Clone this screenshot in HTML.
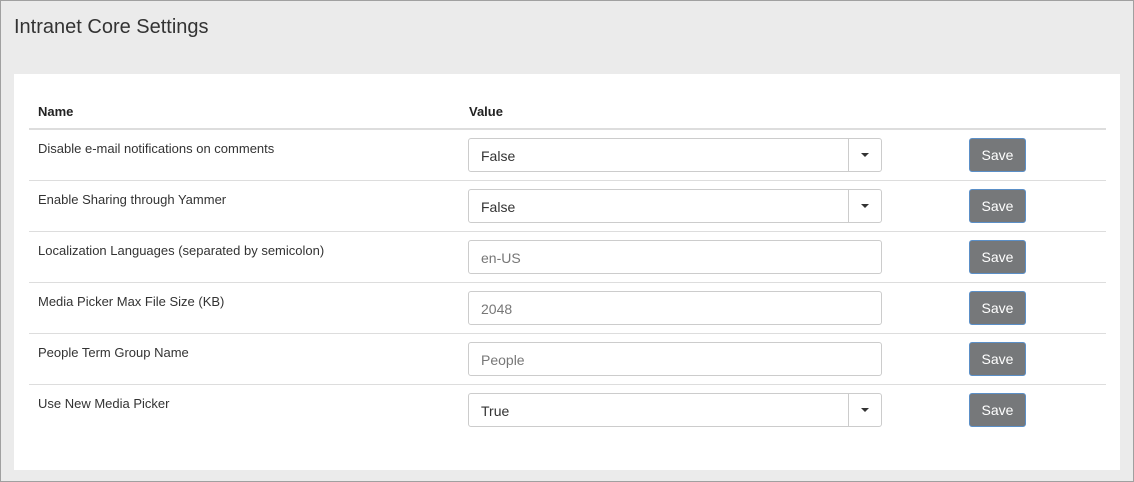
<!DOCTYPE html><html><head><style>
body{margin:0;width:1134px;height:482px;overflow:hidden;font-family:"Liberation Sans",sans-serif;}
.outer{position:absolute;left:0;top:0;width:1132px;height:480px;border:1px solid #a0a0a0;background:#ebebeb;}
h1{position:absolute;left:13px;top:15px;margin:0;font-weight:normal;font-size:20px;color:#333;}
.panel{position:absolute;left:13px;top:73px;width:1106px;height:396px;background:#fff;}
.hd{position:absolute;top:30px;font-weight:bold;font-size:13px;color:#222;}
.hl{position:absolute;left:15px;width:1077px;top:54px;height:2px;background:#ddd;}
.row{position:absolute;left:15px;width:1077px;height:51px;border-bottom:1px solid #ddd;box-sizing:border-box;}
.lbl{position:absolute;left:9px;top:11px;font-size:13px;color:#333;}
.inp{position:absolute;left:439px;top:8px;width:412px;height:32px;border:1px solid #ccc;border-radius:3px;font-size:14px;color:#333;line-height:32px;box-sizing:content-box;}
.inp span{position:absolute;left:12px;top:1px;}
.ph{color:#777;}
.arr{position:absolute;right:0;top:0;width:32px;height:32px;border-left:1px solid #ccc;}
.arr:after{content:"";position:absolute;left:12px;top:14px;border-left:4px solid transparent;border-right:4px solid transparent;border-top:4px solid #333;}
.btn{position:absolute;left:940px;top:8px;width:55px;height:32px;background:#76787a;border:1px solid #5b8fc7;border-radius:3px;color:#fff;font-size:14px;text-align:center;line-height:32px;}
</style></head><body><div class="outer">
<h1>Intranet Core Settings</h1>
<div class="panel">
<div class="hd" style="left:24px">Name</div><div class="hd" style="left:455px">Value</div>
<div class="hl"></div>
<div class="row" style="top:56px"><div class="lbl">Disable e-mail notifications on comments</div><div class="inp"><span>False</span><div class="arr"></div></div><div class="btn">Save</div></div>
<div class="row" style="top:107px"><div class="lbl">Enable Sharing through Yammer</div><div class="inp"><span>False</span><div class="arr"></div></div><div class="btn">Save</div></div>
<div class="row" style="top:158px"><div class="lbl">Localization Languages (separated by semicolon)</div><div class="inp"><span class="ph">en-US</span></div><div class="btn">Save</div></div>
<div class="row" style="top:209px"><div class="lbl">Media Picker Max File Size (KB)</div><div class="inp"><span class="ph">2048</span></div><div class="btn">Save</div></div>
<div class="row" style="top:260px"><div class="lbl">People Term Group Name</div><div class="inp"><span class="ph">People</span></div><div class="btn">Save</div></div>
<div class="row" style="top:311px;border-bottom:none"><div class="lbl">Use New Media Picker</div><div class="inp"><span>True</span><div class="arr"></div></div><div class="btn">Save</div></div>
</div></div></body></html>
